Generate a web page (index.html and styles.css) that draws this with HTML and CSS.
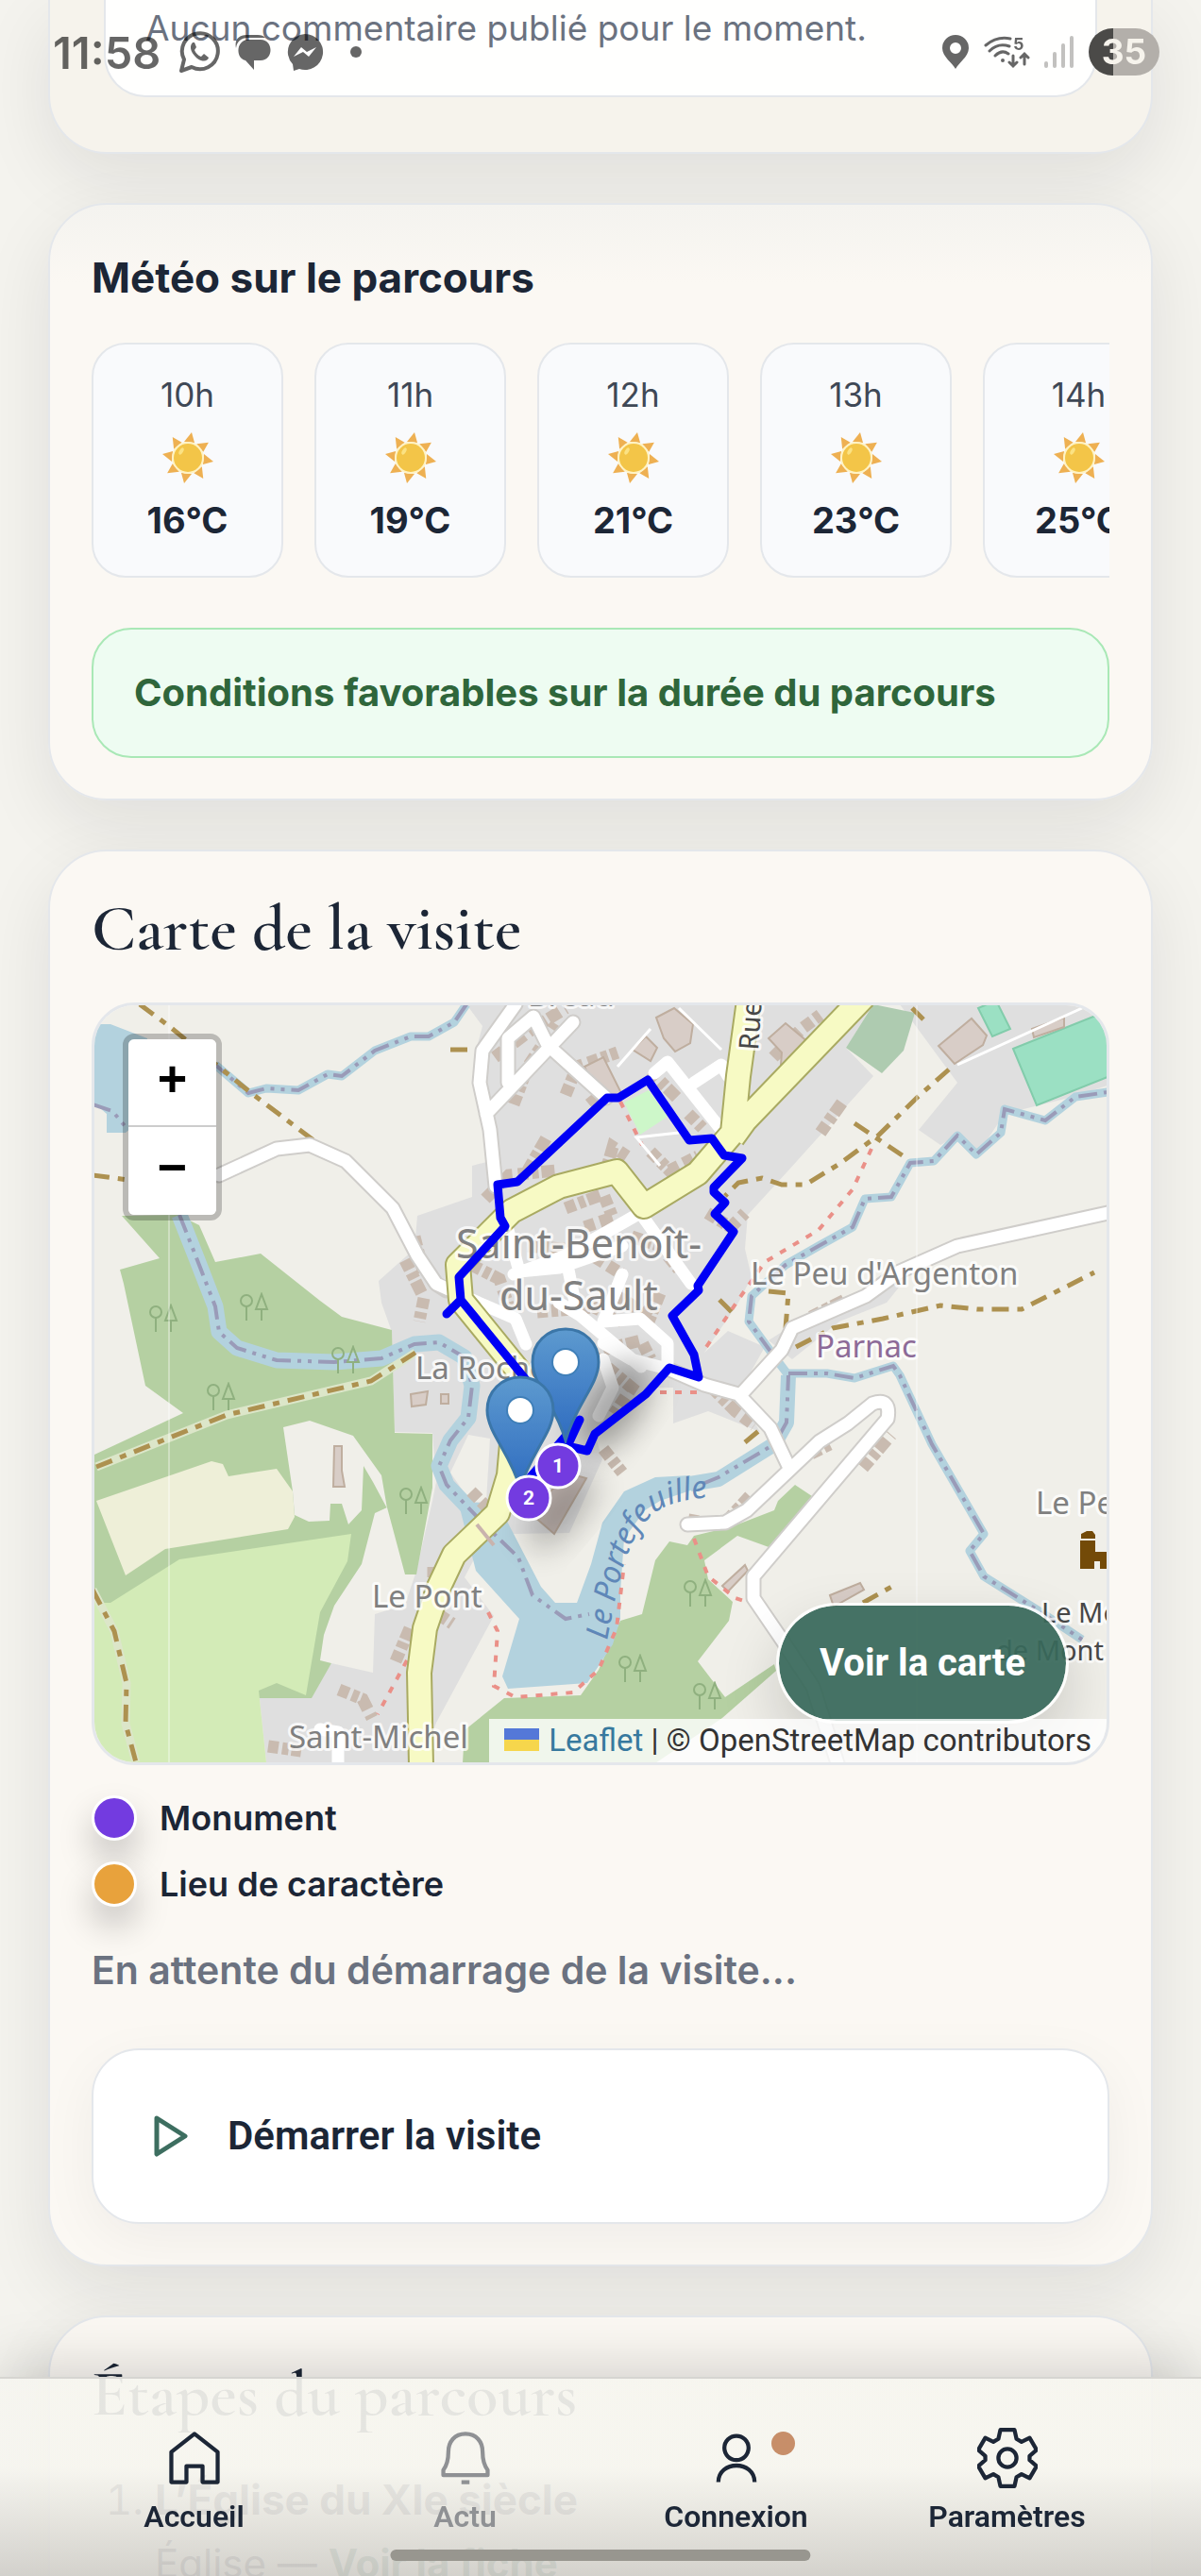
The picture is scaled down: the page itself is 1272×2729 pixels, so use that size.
FILE: index.html
```html
<!DOCTYPE html>
<html lang="fr">
<head>
  <meta charset="UTF-8">
  <meta name="viewport" content="width=device-width, initial-scale=1.0">
  <title>Visite de Saint-Benoît-du-Sault</title>
  <link rel="stylesheet" href="styles.css">
</head>
<body>
  <svg class="defs" aria-hidden="true">
    <defs>
      <linearGradient id="pin-fill" x1="0" y1="0" x2="0" y2="1">
        <stop offset="0" stop-color="#5d9acf"/>
        <stop offset="1" stop-color="#2f6cc0"/>
      </linearGradient>
      <filter id="soft" x="-50%" y="-50%" width="200%" height="200%">
        <feGaussianBlur stdDeviation="16"/>
      </filter>
      <symbol id="sun" viewBox="-28 -28 56 56">
        <g fill="#eeb052">
          <path d="M-4 -17 L4 -27 L7 -16Z"/>
          <path d="M-4 -17 L4 -27 L7 -16Z" transform="rotate(45)"/>
          <path d="M-4 -17 L4 -27 L7 -16Z" transform="rotate(90)"/>
          <path d="M-4 -17 L4 -27 L7 -16Z" transform="rotate(135)"/>
          <path d="M-4 -17 L4 -27 L7 -16Z" transform="rotate(180)"/>
          <path d="M-4 -17 L4 -27 L7 -16Z" transform="rotate(225)"/>
          <path d="M-4 -17 L4 -27 L7 -16Z" transform="rotate(270)"/>
          <path d="M-4 -17 L4 -27 L7 -16Z" transform="rotate(315)"/>
        </g>
        <circle r="17" fill="#fff3c4"/>
        <circle r="15" fill="#f3c548"/>
        <ellipse cx="-7" cy="-7" rx="2" ry="4" fill="#fbe283" transform="rotate(30 -7 -7)"/>
      </symbol>
      <symbol id="trees" viewBox="-16 -16 32 32">
        <g fill="none" stroke="#8fb07f" stroke-width="2">
          <circle cx="-8" cy="-7" r="6"/>
          <path d="M-8 -1V14M8 2V14M2 2L8 -14L14 2Z"/>
        </g>
      </symbol>
      <symbol id="pin" viewBox="0 0 76 124">
        <path d="M38 3C18 3 3 18 3 38C3 62 28 84 38 121C48 84 73 62 73 38C73 18 58 3 38 3Z" fill="url(#pin-fill)" stroke="#3b76a8" stroke-width="3"/>
        <circle cx="38" cy="38" r="15" fill="#3f7fb8"/>
        <circle cx="38" cy="38" r="13" fill="#fff"/>
      </symbol>
    </defs>
  </svg>

  <!-- Phone status bar -->
  <div class="status-bar">
    <div class="status-left">
      <span class="clock">11:58</span>
      <svg width="44" height="46" viewBox="0 0 44 46"><path d="M3 43L6 31A19 19 0 1 1 14 39Z" fill="none" stroke="currentColor" stroke-width="4" stroke-linejoin="round"/><path d="M15 13C10 18 15 26 20 30C26 34 31 33 32 29L27 25L24 28C21 27 18 24 17 21L19 18L17 13Z" fill="currentColor"/></svg>
      <svg width="38" height="38" viewBox="0 0 38 38"><path d="M1 15C-1 6 4 1 12 1H24C28 1 30 2 32 4H14C6 4 2 8 1 15Z" fill="currentColor"/><path d="M14 6H27C41 6 41 28 27 28H20V38L11 28C0 26 1 6 14 6Z" fill="currentColor"/></svg>
      <svg width="40" height="42" viewBox="0 0 40 42"><path d="M20 2A19 19 0 1 1 14 39L8 41L7 34A19 19 0 0 1 20 2Z" fill="currentColor"/><path d="M8 26L16 16L22 21L32 16L24 26L18 21Z" fill="#fff"/></svg>
      <span class="more-dot"></span>
    </div>
    <div class="status-right">
      <svg width="30" height="38" viewBox="0 0 30 38"><path d="M15 1A14 14 0 0 0 1 15C1 24 12 31 15 37C18 31 29 24 29 15A14 14 0 0 0 15 1ZM15 9A6 6 0 1 1 15 21A6 6 0 0 1 15 9Z" fill="currentColor" fill-rule="evenodd"/></svg>
      <svg width="50" height="36" viewBox="0 0 50 36"><g fill="none" stroke="currentColor" stroke-width="3" stroke-linecap="round"><path d="M3 11Q15 1 29 4M7 17Q16 8 28 12M13 22Q20 15 27 20M32 22V33M28 29L32 33L36 29M44 31V20M40 24L44 20L48 24"/></g><circle cx="21" cy="27" r="2" fill="currentColor"/><text x="32" y="16" class="wifi-gen">5</text></svg>
      <svg width="34" height="38" viewBox="0 0 34 38"><path d="M3 31V34M12 21V34M21 12V34M30 4V34" stroke="#c2c1bf" stroke-width="4" stroke-linecap="round"/></svg>
      <span class="battery">35</span>
    </div>
  </div>

  <main class="page">
    <section class="card card-comments">
      <p class="empty-comment">Aucun commentaire publié pour le moment.</p>
    </section>

    <section class="card card-weather">
      <h3>Météo sur le parcours</h3>
      <div class="hours">
        <div class="hour"><span>10h</span><svg class="sun"><use href="#sun"/></svg><strong>16°C</strong></div>
        <div class="hour"><span>11h</span><svg class="sun"><use href="#sun"/></svg><strong>19°C</strong></div>
        <div class="hour"><span>12h</span><svg class="sun"><use href="#sun"/></svg><strong>21°C</strong></div>
        <div class="hour"><span>13h</span><svg class="sun"><use href="#sun"/></svg><strong>23°C</strong></div>
        <div class="hour"><span>14h</span><svg class="sun"><use href="#sun"/></svg><strong>25°C</strong></div>
      </div>
      <p class="alert">Conditions favorables sur la durée du parcours</p>
    </section>

    <section class="card">
      <h2>Carte de la visite</h2>
      <div class="map">
        <svg class="map-canvas" viewBox="100 1065 1074 802" preserveAspectRatio="xMidYMid slice">
          <rect x="-900" y="1000" width="3000" height="900" fill="#f0efe9"/>

          <!-- land use -->
          <g fill="#dfdfdf">
            <path d="M495 1064L512 1087L505 1113L509 1180L520 1230L501 1235L501 1268L443 1288L440 1323L402 1357L405 1380L416 1411L419 1517L459 1518L463 1570L486 1590L545 1625L604 1624L639 1546L631 1519L690 1470L714 1470L714 1508L751 1495L806 1517L783 1477L811 1427L772 1410L747 1433L783 1380L797 1353L790 1323L793 1287L836 1240L926 1140L897 1110L926 1064Z"/>
            <path d="M463 1570L459 1590L442 1664L430 1700L398 1710L396 1772L352 1762L325 1799L298 1783L275 1791L283 1867H447L463 1825L524 1712L493 1671L532 1597Z"/>
            <path d="M954 1064H1174V1150L1133 1163L1065 1180L1036 1223L1015 1203L997 1213L974 1197L1015 1147Z"/>
            <path d="M815 1420L870 1385L960 1355L940 1380L890 1400L840 1440Z"/>
          </g>
          <path fill="#f0efe9" d="M497 1520L520 1524L516 1590L500 1592L478 1560Z"/>
          <g fill="#b5d0a2">
            <path d="M99 1542L195 1497L155 1468L132 1360L128 1345L170 1333L130 1288L190 1287L212 1298L229 1337L277 1328L340 1378L363 1395L416 1409L419 1518L459 1519L459 1576L442 1668L430 1668L411 1597L398 1603L384 1657L355 1701L344 1732L340 1759L352 1762L331 1799L99 1799Z"/>
            <path d="M658 1717L681 1710L695 1653L710 1633L729 1637L736 1627L777 1617L821 1600L825 1590L843 1573L864 1587L818 1640L782 1627L747 1653L751 1673L777 1697L773 1717L740 1760L769 1798L821 1763L823 1770L766 1820L695 1868H491L493 1833L535 1799L616 1796L635 1769Z"/>
          </g>
          <path fill="#d3ebb7" d="M118 1698L191 1652L373 1625L369 1654L340 1708L325 1796L294 1783L275 1791L283 1867H99V1698Z"/>
          <path fill="#eeefd8" d="M103 1590L225 1548L237 1551L243 1564L294 1556L311 1580L313 1607L306 1620L176 1641L134 1669Z"/>
          <path fill="#f0efe9" d="M301 1512L329 1505L375 1521L405 1563L411 1598L396 1570L386 1553L384 1600L370 1615L363 1593L351 1593L350 1611L328 1612L313 1605L311 1580Z"/>
          <path fill="#aecbb0" d="M926 1064L970 1073L958 1113L935 1137L897 1110Z"/>
          <path fill="#9be0c3" stroke="#82ccab" stroke-width="2" d="M1074 1111L1174 1071V1141L1099 1171ZM1037 1068L1056 1060L1071 1090L1052 1098Z"/>
          <path fill="#cdf7c9" d="M662 1168L688 1155L708 1183L679 1202Z"/>

          <!-- water -->
          <path fill="#b3d2de" d="M99 1085H118L157 1100V1180L134 1200H114V1180L99 1167Z"/>
          <path fill="#b3d2de" d="M486 1590L520 1593L532 1600L545 1625L574 1681L589 1698H612L627 1657L639 1613L662 1580L695 1565L732 1563L735 1578L700 1590L684 1600L662 1630L658 1687V1715L650 1742L623 1783L539 1789L533 1776L551 1715L505 1664Z"/>
          <g fill="none" stroke="#b3d2de" stroke-linejoin="round">
            <path stroke-width="17" d="M191 1287L210 1335L229 1384L233 1411L252 1428L294 1441L355 1443L405 1439L440 1424L466 1422L493 1438L501 1468L497 1502L478 1526L466 1553L474 1573L512 1613"/>
            <path stroke-width="16" d="M732 1572L762 1567L821 1530L834 1507L836 1457"/>
            <path stroke-width="9" d="M836 1457L818 1433L794 1400L797 1373L833 1340L868 1320L904 1300L917 1270L945 1268L965 1232L990 1230L1015 1203L1035 1223L1061 1200L1065 1175L1108 1187L1140 1162L1174 1157"/>
            <path stroke-width="9" d="M836 1455H877L906 1460L947 1447L954 1457L988 1530L1043 1625L1028 1643L1043 1670L1102 1707L1147 1737"/>
            <path stroke-width="9" d="M495 1064L482 1083L455 1098L436 1098L398 1113L363 1140L348 1138L317 1155L283 1153L264 1158L229 1128"/>
          </g>
          <g class="boundary">
            <path d="M191 1287L210 1335L229 1384L233 1411L252 1428L294 1441L355 1443L405 1439L440 1424L466 1422L493 1438L501 1468L497 1502L478 1526L466 1553L474 1573L512 1613L550 1650L565 1690L600 1715L625 1710"/>
            <path d="M745 1572L762 1565L821 1530L834 1507L836 1457"/>
            <path d="M818 1433L794 1400L797 1373L833 1340L868 1320L904 1300L917 1270L945 1268L965 1232L990 1230L1015 1203L1035 1223L1061 1200L1065 1175L1108 1187L1140 1162L1174 1157"/>
            <path d="M836 1455H877L906 1460L947 1447L954 1457L988 1530L1043 1625L1028 1643L1043 1670L1102 1707L1147 1737"/>
            <path d="M495 1064L482 1083L455 1098L436 1098L398 1113L363 1140L348 1138L317 1155L283 1153L264 1158L229 1128"/>
            <path d="M99 1170L120 1177L135 1195"/>
          </g>

          <!-- buildings -->
          <g class="buildings">
            <path d="M525 1120L565 1090L600 1068M545 1170L560 1130L590 1085M600 1160L612 1130L655 1115M625 1170L650 1150"/>
            <path d="M560 1240L580 1205M515 1270L540 1245L590 1240M640 1250L650 1215L665 1225"/>
            <path d="M600 1280L640 1265L650 1290L620 1300M670 1310L700 1320L720 1345M690 1220L710 1240L740 1225"/>
            <path d="M690 1135L720 1165M730 1180L745 1195M750 1285L775 1300L790 1285M870 1200L895 1165M820 1120L850 1090L870 1075"/>
            <path d="M500 1340L530 1355L540 1385M560 1320L620 1325L660 1350M570 1390L630 1385L660 1400M640 1430L680 1420L690 1440"/>
            <path d="M610 1420L670 1470L650 1500M700 1370L690 1395L650 1370M755 1470L780 1495L800 1510M430 1335L450 1375L445 1400"/>
            <path d="M440 1310L450 1350M640 1535L660 1560M500 1580L520 1600M460 1660V1690M860 1395L900 1375M730 1610L760 1615M770 1612L795 1585"/>
            <path d="M360 1790L385 1800L395 1820M285 1850L320 1855M420 1760L435 1725M465 1710L480 1720M860 1540L880 1530M915 1555L945 1520"/>
          </g>
          <g fill="#d8cdc7" stroke="#bfae9f" stroke-width="2">
            <path d="M815 1100L833 1084L858 1105L838 1133L828 1128L829 1115ZM696 1078L715 1068L735 1085L732 1105L716 1114L704 1100ZM671 1112L685 1098L697 1110L690 1124ZM995 1108L1030 1079L1046 1097L1042 1107L1012 1127Z"/>
            <path d="M640 1170L660 1160L640 1120L620 1130ZM1094 1090L1128 1078V1088L1096 1099ZM436 1477L454 1474L452 1488L437 1490ZM468 1477H476V1487H468ZM766 1680L790 1658L793 1664L772 1686ZM880 1690L912 1677L916 1684L884 1702ZM355 1532H363V1558L366 1575H354Z"/>
            <path fill="#c9bdb8" d="M565 1605L600 1560L622 1566L588 1625Z"/>
          </g>

          <!-- footpaths -->
          <g class="track-casing">
            <path d="M103 1554L241 1499L394 1463L441 1433"/>
            <path d="M99 1684L122 1728L135 1783L134 1826L145 1867"/>
          </g>
          <g class="track">
            <path d="M149 1064L180 1087L267 1158L333 1208M99 1245L137 1250M478 1112H507"/>
            <path d="M967 1068L979 1080M1006 1133L972 1163L931 1203L890 1233L854 1255H829L808 1248L783 1253L769 1267M906 1190L961 1227"/>
            <path d="M844 1427L883 1407L936 1397L997 1383L1036 1387H1083L1160 1348M815 1368L836 1370L833 1407M763 1377L776 1390"/>
            <path d="M103 1554L241 1499L394 1463L441 1433"/>
            <path d="M99 1684L122 1728L135 1783L134 1826L145 1867M790 1528L808 1513M915 1698L947 1680"/>
          </g>
          <g class="footway">
            <path d="M924 1217L904 1260L868 1303L811 1337L783 1377L747 1430M658 1167L681 1213"/>
            <path d="M518 1708L528 1728L524 1786L547 1798L608 1793L635 1769L654 1725L662 1657M432 1759L401 1816"/>
            <path d="M736 1630L751 1670L780 1693L795 1698M700 1475H745"/>
          </g>

          <!-- roads -->
          <g class="road road-casing">
            <path d="M233 1245L294 1217L329 1213L367 1230L417 1280L443 1330L463 1360L474 1367"/>
            <path d="M547 1064L512 1113L509 1147L520 1197L526 1257M516 1180L608 1083M539 1147V1100L566 1077L581 1107L643 1163"/>
            <path d="M786 1477L829 1430L840 1407L918 1373L954 1347L1015 1320L1174 1285M708 1450L747 1467L783 1477L817 1513L836 1553"/>
            <path d="M729 1615L769 1613L792 1600L869 1527L899 1508L925 1487Q945 1480 941 1503L799 1670V1693L829 1737L862 1787L888 1868"/>
          </g>
          <g class="road">
            <path d="M233 1245L294 1217L329 1213L367 1230L417 1280L443 1330L463 1360L501 1377L547 1397L558 1424"/>
            <path d="M547 1064L512 1113L509 1147L520 1197L526 1257M516 1180L608 1083M539 1147V1100L566 1077L581 1107L643 1163"/>
            <path d="M694 1137L708 1125L765 1197M736 1147L765 1128L772 1140"/>
            <path d="M786 1477L829 1430L840 1407L918 1373L954 1347L1015 1320L1174 1285M708 1450L747 1467L783 1477L817 1513L836 1553"/>
            <path d="M729 1615L769 1613L792 1600L869 1527L899 1508L925 1487Q945 1480 941 1503L799 1670V1693L829 1737L862 1787L888 1868"/>
            <path d="M545 1350L600 1330L679 1285L733 1360M539 1303L551 1347L593 1343L660 1320M593 1380L616 1394L680 1448M640 1400L679 1397L708 1423V1450M640 1423L669 1440L708 1450M660 1350L640 1400M600 1330L612 1390M359 1867V1835L340 1832M640 1440L650 1470L635 1500"/>
          </g>
          <path fill="none" stroke="#fff" stroke-width="3" d="M1015 1128L1147 1068M720 1068L765 1112M655 1130L690 1090M700 1235L675 1205L720 1200"/>
          <g class="main-road main-road-casing">
            <path d="M794 1060L783 1140L777 1200L740 1243L683 1278L654 1241L593 1257L543 1283L486 1340L489 1377L550 1452L540 1563L528 1603L482 1647L466 1681L451 1725L445 1772L447 1870M916 1056L790 1187L777 1205"/>
          </g>
          <g class="main-road">
            <path d="M794 1060L783 1140L777 1200L740 1243L683 1278L654 1241L593 1257L543 1283L486 1340L489 1377L550 1452L540 1563L528 1603L482 1647L466 1681L451 1725L445 1772L447 1870M916 1056L790 1187L777 1205"/>
          </g>
          <path d="M506 1615L524 1637" stroke="#c9b3ad" stroke-width="4"/>

          <use href="#trees" x="158" y="1381" width="32" height="32"/>
          <use href="#trees" x="254" y="1369" width="32" height="32"/>
          <use href="#trees" x="351" y="1425" width="32" height="32"/>
          <use href="#trees" x="219" y="1464" width="32" height="32"/>
          <use href="#trees" x="423" y="1574" width="32" height="32"/>
          <use href="#trees" x="724" y="1672" width="32" height="32"/>
          <use href="#trees" x="655" y="1752" width="32" height="32"/>
          <use href="#trees" x="734" y="1781" width="32" height="32"/>

          <path stroke="#fff" stroke-width="1" opacity=".7" d="M180 1064V1867M972 1064V1867"/>

          <!-- place names -->
          <g class="place">
            <text x="484" y="1333" class="town">Saint-Benoît-</text>
            <text x="530" y="1388" class="town">du-Sault</text>
            <text x="796" y="1361">Le Peu d'Argenton</text>
            <text x="441" y="1461">La Roche</text>
            <text x="395" y="1703">Le Pont</text>
            <text x="307" y="1852">Saint-Michel</text>
            <text x="560" y="1066">Breau</text>
            <text x="1098" y="1604">Le Peu</text>
            <text x="1104" y="1719" class="dark">Le Mont</text>
            <text x="1056" y="1759" class="dark">de Mont</text>
            <text x="865" y="1438" class="parish">Parnac</text>
            <text class="dark" transform="translate(804 1113) rotate(-86)">Rue</text>
          </g>
          <path id="river-name" fill="none" d="M644 1738C655 1680 662 1640 685 1612C700 1594 720 1588 775 1584"/>
          <text class="river-label"><textPath href="#river-name">Le Portefeuille</textPath></text>
          <path fill="#734a08" d="M1145 1632H1161V1644H1174V1662H1166V1654H1160V1662H1145ZM1146 1630V1625L1152 1622H1158L1161 1626V1630Z"/>

          <!-- visit route -->
          <ellipse cx="650" cy="1490" rx="28" ry="55" fill="#000" opacity=".35" filter="url(#soft)" transform="rotate(35 650 1490)"/>
          <ellipse cx="595" cy="1600" rx="22" ry="50" fill="#000" opacity=".25" filter="url(#soft)" transform="rotate(40 595 1600)"/>
          <path class="route" d="M474 1392L489 1377L487 1353L536 1299L531 1290L528 1255L549 1252L644 1163H656L687 1144L731 1208L755 1206L768 1224L787 1227L757 1258V1263L769 1274L758 1286L778 1305L740 1362L741 1367L713 1394L736 1435L741 1459L710 1449L685 1477L631 1519L623 1537L602 1532L615 1504L560 1568M489 1377L560 1464"/>
          <use href="#pin" x="562" y="1405" width="76" height="124"/>
          <use href="#pin" x="514" y="1456" width="76" height="124"/>
          <g class="stop">
            <circle cx="592" cy="1553" r="23"/>
            <text x="592" y="1560">1</text>
            <circle cx="561" cy="1587" r="23"/>
            <text x="561" y="1594">2</text>
          </g>
        </svg>
        <div class="zoom">
          <button type="button" aria-label="Zoom avant">+</button>
          <button type="button" aria-label="Zoom arrière">−</button>
        </div>
        <button type="button" class="map-open">Voir la carte</button>
        <div class="attribution">
          <a href="#"><span class="flag"></span>Leaflet</a> | © OpenStreetMap contributors
        </div>
      </div>

      <ul class="legend">
        <li><span class="dot dot-monument"></span>Monument</li>
        <li><span class="dot dot-place"></span>Lieu de caractère</li>
      </ul>
      <p class="visit-status">En attente du démarrage de la visite...</p>
      <button type="button" class="start">
        <svg width="40" height="48" viewBox="0 0 40 48"><path d="M5 5L35 24L5 43Z" fill="none" stroke="#3d6e60" stroke-width="5" stroke-linejoin="round"/></svg>
        Démarrer la visite
      </button>
    </section>

    <section class="card card-steps">
      <h2>Étapes du parcours</h2>
      <ol class="steps">
        <li><strong>L’Église du XIe siècle</strong><br><span>Église — <a href="#">Voir la fiche</a></span></li>
      </ol>
    </section>
  </main>

  <nav class="tabs">
    <a href="#">
      <svg viewBox="0 0 60 60"><path d="M7 54V24L30 6L53 24V54H38V38H22V54Z"/></svg>
      Accueil
    </a>
    <a href="#" class="inactive">
      <svg viewBox="0 0 60 60"><path d="M30 6C19 6 13 14 13 24C13 34 11 38 8 42V47H52V42C49 38 47 34 47 24C47 14 41 6 30 6ZM26 54H34"/></svg>
      Actu
    </a>
    <a href="#">
      <svg viewBox="0 0 60 60"><circle cx="30" cy="20" r="12"/><path d="M12 54C12 32 48 32 48 54"/></svg>
      <span class="badge"></span>
      Connexion
    </a>
    <a href="#">
      <svg viewBox="0 0 60 60"><circle cx="30" cy="30" r="9"/><path d="M23 2H37L39 11L44 14L52 10L59 22L52 28V32L59 38L52 50L44 46L39 49L37 58H23L21 49L16 46L8 50L1 38L8 32V28L1 22L8 10L16 14L21 11Z"/></svg>
      Paramètres
    </a>
    <div class="home-indicator"></div>
  </nav>
</body>
</html>
```
FILE: styles.css
```css
:root {
  --ink: #1c2636;
  --muted: #6b7280;
  --card: #fbf8f3;
  --line: #e4e7eb;
  --green: #3d6e60;
}

* {
  box-sizing: border-box;
  margin: 0;
  padding: 0;
}

body {
  font-family: Inter, "Liberation Sans", sans-serif;
  font-size: 40px;
  color: var(--ink);
  background: #f4f3ee;
  height: 100vh;
  overflow: hidden;
}

button {
  font-family: Roboto, sans-serif;
  font-size: 42px;
  cursor: pointer;
}

a {
  color: inherit;
  text-decoration: none;
}

.defs {
  position: absolute;
  width: 0;
  height: 0;
}

/* status bar */
.status-bar {
  position: fixed;
  top: 0;
  left: 0;
  right: 0;
  height: 110px;
  padding: 0 44px 0 56px;
  display: flex;
  justify-content: space-between;
  align-items: center;
  color: rgba(0, 0, 0, 0.6);
  z-index: 10;
}

.status-left,
.status-right {
  display: flex;
  align-items: center;
  gap: 16px;
}

.clock {
  font-size: 47px;
  font-weight: 600;
  margin-right: 3px;
}

.more-dot {
  width: 12px;
  height: 12px;
  margin-left: 12px;
  border-radius: 50%;
  background: currentColor;
}

.status-right {
  gap: 14px;
}

.wifi-gen {
  font-size: 18px;
  font-weight: 700;
  fill: currentColor;
}

.battery {
  width: 75px;
  height: 50px;
  line-height: 50px;
  border-radius: 25px;
  background: linear-gradient(90deg, #4b4a48 34%, #b3afaa 34%);
  color: #f6f3ec;
  font-size: 37px;
  font-weight: 700;
  text-align: center;
}

/* cards */
.page {
  padding: 0 51px;
  display: flex;
  flex-direction: column;
  gap: 52px;
}

.card {
  flex: none;
  background: var(--card);
  border: 2px solid var(--line);
  border-radius: 62px;
  padding: 43px 44px;
  box-shadow: 0 26px 76px rgba(20, 24, 32, 0.09);
}

.card-comments {
  border-top: 0;
  border-radius: 0 0 62px 62px;
  background: #f6f3ec;
  padding: 0 57px 58px;
}

.empty-comment {
  padding: 0 42px 41px;
  line-height: 60px;
  font-size: 37px;
  color: var(--muted);
  background: #fffffe;
  border: 2px solid var(--line);
  border-top: 0;
  border-radius: 0 0 44px 44px;
}

.card-weather {
  background: linear-gradient(#f4f3ef, var(--card) 84px);
}

h2 {
  font-family: "Cormorant Garamond", "Liberation Serif", serif;
  font-size: 69px;
  font-weight: 600;
  line-height: 76px;
  margin-bottom: 41px;
}

h3 {
  font-size: 44px;
  font-weight: 700;
  line-height: 68px;
  margin-bottom: 35px;
}

/* weather */
.hours {
  display: flex;
  gap: 33px;
  overflow: hidden;
}

.hour {
  flex: 0 0 203px;
  display: flex;
  flex-direction: column;
  align-items: center;
  padding: 28px 0 34px;
  line-height: 50px;
  background: #f9fafc;
  border: 2px solid var(--line);
  border-radius: 36px;
}

.hour span {
  font-size: 35px;
  color: #3f4856;
}

.hour strong {
  font-size: 38px;
  font-weight: 700;
}

.sun {
  width: 56px;
  height: 56px;
  margin: 14px 0 13px;
}

.alert {
  margin-top: 53px;
  padding: 43px;
  line-height: 48px;
  font-weight: 700;
  color: #2f663b;
  background: #eefcf2;
  border: 2px solid #a9e8b6;
  border-radius: 42px;
}

/* map */
.map {
  position: relative;
  height: 808px;
  border: 3px solid var(--line);
  border-radius: 46px;
  overflow: hidden;
}

.map-canvas {
  display: block;
  width: 100%;
  height: 100%;
}

.boundary {
  fill: none;
  stroke: #9a9bb8;
  stroke-width: 4;
  stroke-dasharray: 20 7 4 7 4 7;
}

.buildings {
  fill: none;
  stroke: #c9bbb0;
  stroke-width: 13;
  stroke-dasharray: 11 4 7 3 14 6;
}

.track-casing {
  fill: none;
  stroke: #dce6c9;
  stroke-width: 9;
}

.track {
  fill: none;
  stroke: #ad9150;
  stroke-width: 5;
  stroke-dasharray: 18 9 7 9;
}

.footway {
  fill: none;
  stroke: #ea9088;
  stroke-width: 4;
  stroke-dasharray: 7 9;
}

.road {
  fill: none;
  stroke: #fff;
  stroke-width: 13;
  stroke-linejoin: round;
  stroke-linecap: round;
}

.road-casing {
  stroke: #cfcdca;
  stroke-width: 17;
}

.main-road {
  fill: none;
  stroke: #f7fac4;
  stroke-width: 24;
  stroke-linejoin: round;
}

.main-road-casing {
  stroke: #a9aa62;
  stroke-width: 28;
}

.place text {
  font-family: "Noto Sans", sans-serif;
  font-size: 33px;
  fill: #808080;
  stroke: rgba(255, 255, 255, 0.75);
  stroke-width: 6;
  stroke-linejoin: round;
  paint-order: stroke;
}

.place .town {
  font-size: 43px;
}

.place .dark {
  font-size: 29px;
  fill: #484848;
}

.place .parish {
  fill: #8d6b98;
}

.river-label {
  font-family: "Noto Sans", sans-serif;
  font-size: 33px;
  font-style: italic;
  fill: #5f87b8;
}

.route {
  fill: none;
  stroke: #0000f5;
  stroke-width: 9;
  stroke-linejoin: round;
  stroke-linecap: round;
}

.stop circle {
  fill: #733be0;
  stroke: #fff;
  stroke-width: 3;
}

.stop text {
  font-family: Roboto, sans-serif;
  font-size: 21px;
  font-weight: 700;
  fill: #fff;
  text-anchor: middle;
}

.zoom {
  position: absolute;
  top: 30px;
  left: 30px;
  border: 6px solid rgba(0, 0, 0, 0.22);
  background-clip: padding-box;
  border-radius: 12px;
}

.zoom button {
  display: block;
  width: 93px;
  height: 93px;
  padding-bottom: 10px;
  border: 0;
  border-radius: 0 0 6px 6px;
  background: #fff;
  color: #000;
  font: 700 54px "Liberation Sans", sans-serif;
}

.zoom button:first-child {
  border-bottom: 2px solid #ccc;
  border-radius: 6px 6px 0 0;
}

.map-open {
  position: absolute;
  right: 40px;
  bottom: 41px;
  padding: 36px 43px;
  line-height: 50px;
  font-size: 40px;
  font-weight: 700;
  color: #fff;
  background: rgba(56, 104, 90, 0.93);
  border: 3px solid rgba(255, 255, 255, 0.85);
  background-clip: padding-box;
  border-radius: 64px;
  box-shadow: 0 26px 62px rgba(0, 0, 0, 0.16);
}

.attribution {
  position: absolute;
  right: 0;
  bottom: 0;
  padding: 0 16px;
  line-height: 46px;
  font-family: Roboto, sans-serif;
  font-size: 33px;
  color: #333;
  background: rgba(255, 255, 255, 0.8);
}

.attribution a {
  color: #37799e;
}

.flag {
  display: inline-block;
  width: 37px;
  height: 24px;
  margin-right: 10px;
  background: linear-gradient(#5478d8 50%, #f6d64c 50%);
}

/* legend */
.legend {
  list-style: none;
  margin-top: 32px;
  display: grid;
  gap: 22px;
}

.legend li {
  display: flex;
  align-items: center;
  gap: 24px;
  height: 48px;
  font-size: 36px;
  font-weight: 600;
}

.dot {
  width: 48px;
  height: 48px;
  border: 3px solid #fff;
  border-radius: 50%;
  box-shadow: 0 20px 36px rgba(0, 0, 0, 0.22);
}

.dot-monument {
  background: #733be0;
}

.dot-place {
  background: #e8a23c;
}

.visit-status {
  margin: 37px 0 53px;
  line-height: 60px;
  font-size: 41px;
  font-weight: 600;
  color: var(--muted);
}

.start {
  display: flex;
  align-items: center;
  gap: 40px;
  width: 100%;
  padding: 66px 62px;
  line-height: 50px;
  font-weight: 600;
  color: var(--ink);
  background: #fff;
  border: 2px solid var(--line);
  border-radius: 50px;
  box-shadow: 0 16px 60px rgba(20, 24, 32, 0.05);
}

/* steps */
.steps {
  padding-left: 67px;
  color: #4a5361;
  line-height: 67px;
  font-size: 42px;
}

.steps li::marker {
  font-size: 44px;
}

.steps strong {
  font-size: 44px;
  font-weight: 700;
}

.steps a {
  font-weight: 700;
  color: var(--green);
}

/* bottom navigation */
.tabs {
  position: fixed;
  left: 0;
  right: 0;
  bottom: 0;
  height: 211px;
  padding: 52px 62px 0;
  display: grid;
  grid-template-columns: repeat(4, 1fr);
  align-items: start;
  background: linear-gradient(rgba(246, 245, 239, 0.92) 45%, rgba(208, 206, 201, 0.92));
  border-top: 2px solid #d6d5d1;
  box-shadow: 0 -8px 60px rgba(0, 0, 0, 0.17);
}

.tabs a {
  position: relative;
  display: flex;
  flex-direction: column;
  align-items: center;
  gap: 11px;
  font-family: Roboto, sans-serif;
  font-size: 32px;
  font-weight: 600;
  line-height: 38px;
}

.tabs svg {
  width: 64px;
  height: 64px;
  fill: none;
  stroke: currentColor;
  stroke-width: 4;
  stroke-linejoin: round;
}

.tabs .inactive {
  color: #8f9194;
}

.badge {
  position: absolute;
  top: 4px;
  left: calc(50% + 37px);
  width: 25px;
  height: 25px;
  border-radius: 50%;
  background: #c78e69;
}

.home-indicator {
  position: absolute;
  bottom: 16px;
  left: 50%;
  width: 35%;
  height: 12px;
  transform: translateX(-50%);
  border-radius: 6px;
  background: #98968f;
}
```
